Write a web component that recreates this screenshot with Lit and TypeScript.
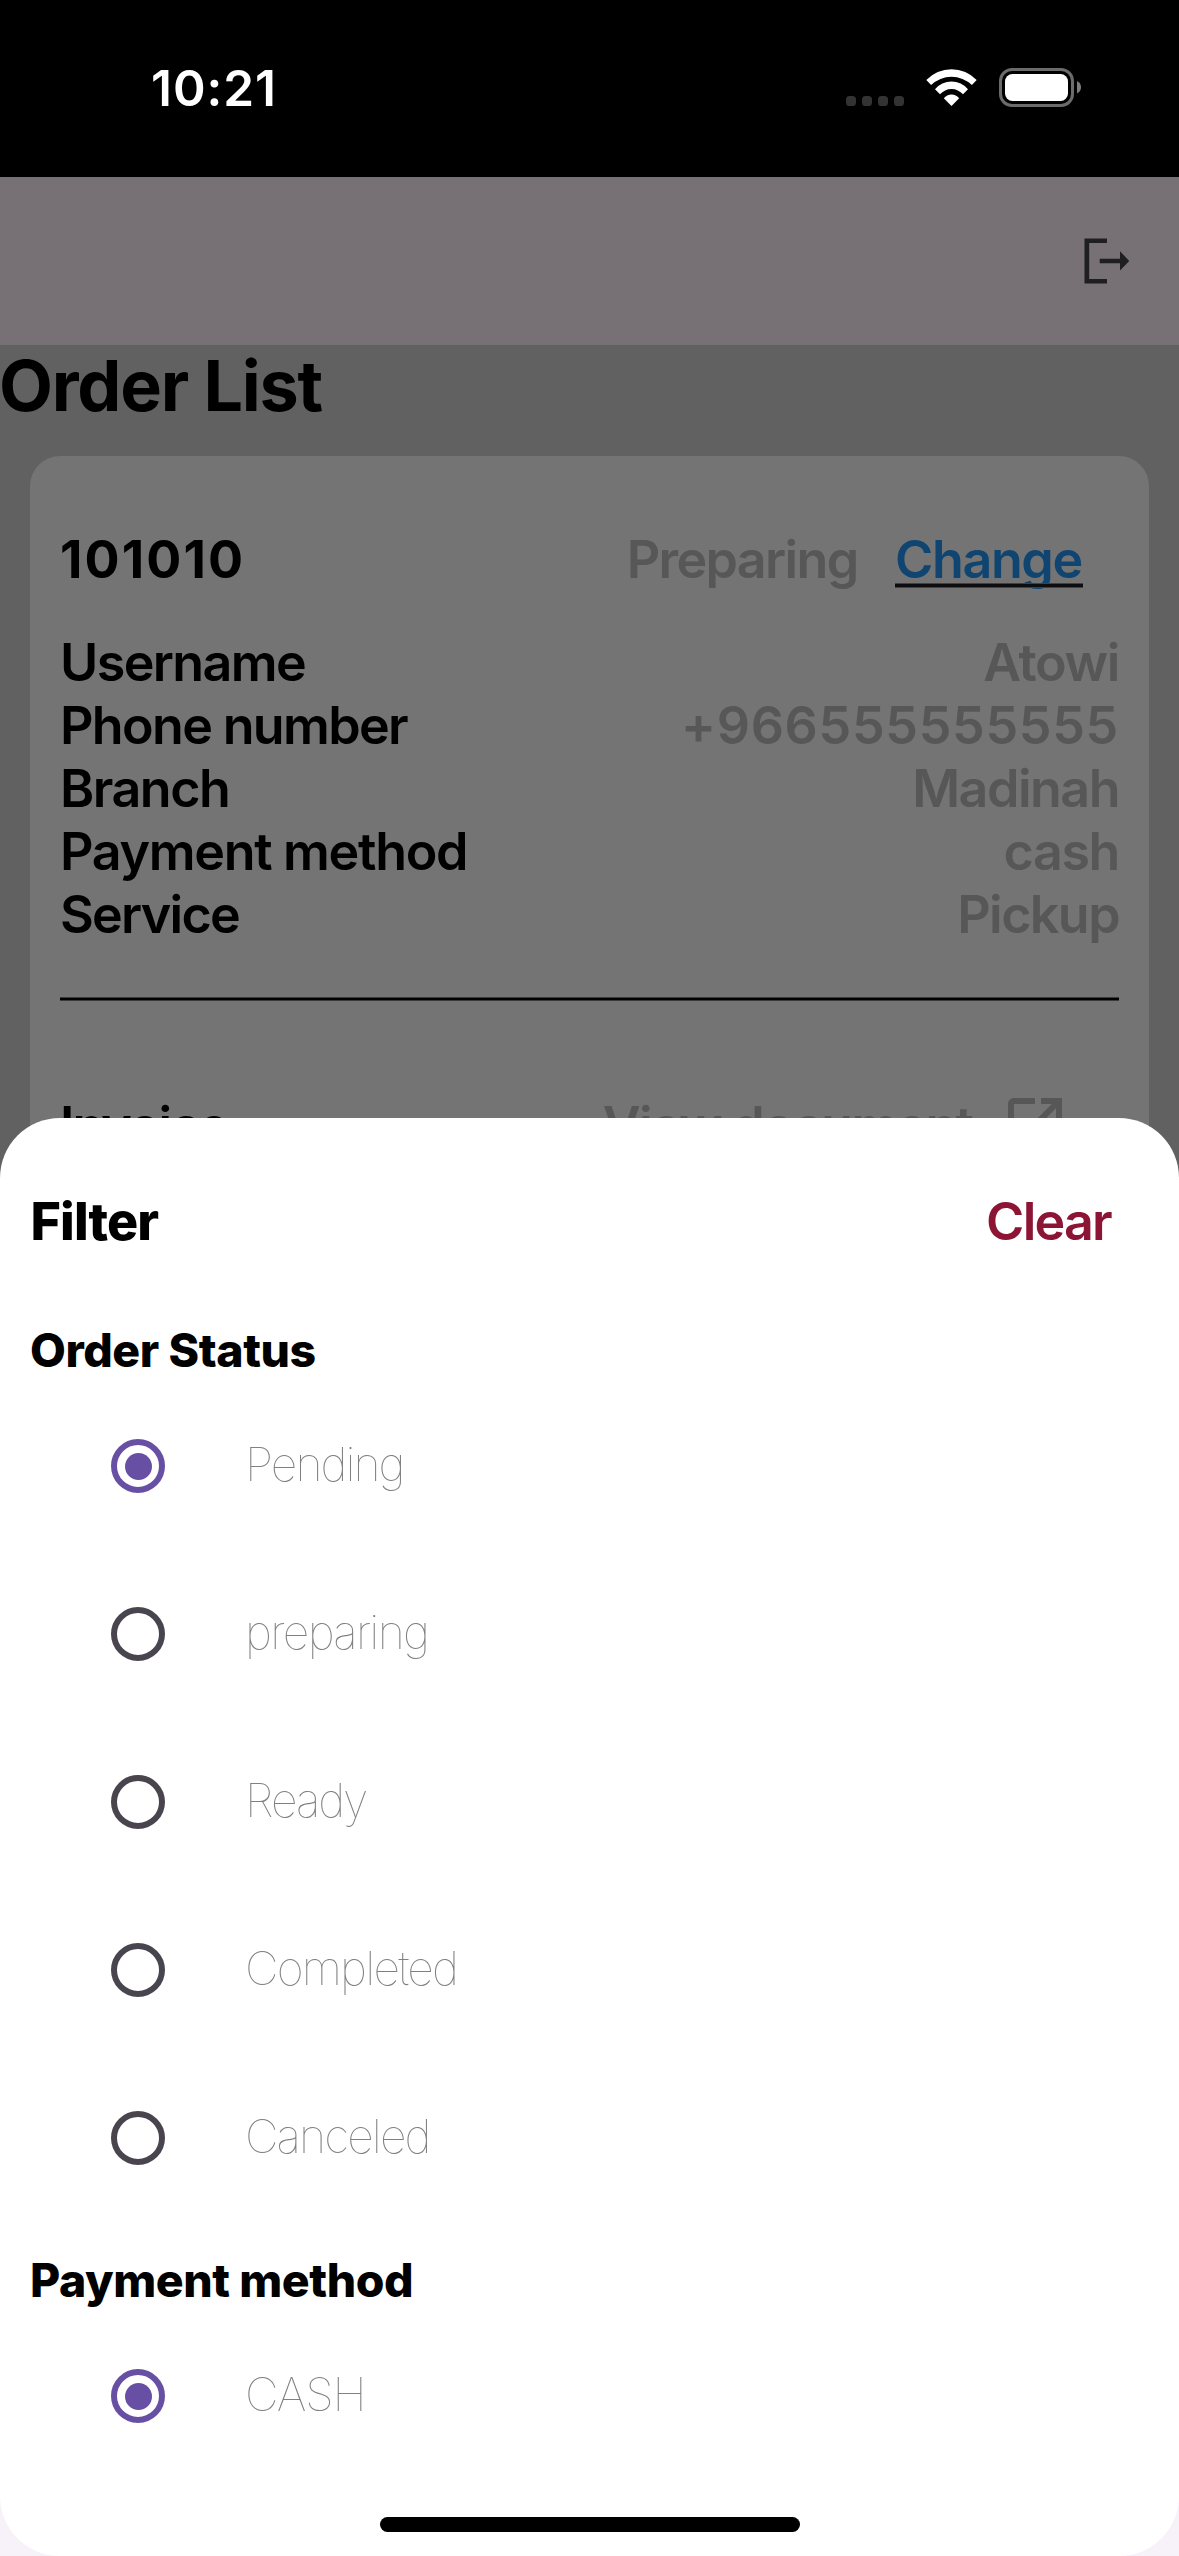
import { LitElement, html, css, svg } from "lit";
import { customElement, property } from "lit/decorators.js";
import { classMap } from "lit/directives/class-map.js";
import { styleMap } from "lit/directives/style-map.js";

/** A piece of text with its own tracking, in pixels. */
interface Tracked {
  text: string;
  tracking: number;
}

const t = (text: string, tracking: number): Tracked => ({ text, tracking });

const spacing = (item: Tracked) => styleMap({ letterSpacing: `${item.tracking}px` });

const orderFields: { label: Tracked; value: Tracked }[] = [
  { label: t("Username", -1.6), value: t("Atowi", -1.36) },
  { label: t("Phone number", -1.67), value: t("+966555555555", 0.68) },
  { label: t("Branch", -1.48), value: t("Madinah", -1.51) },
  { label: t("Payment method", -1.31), value: t("cash", -1.41) },
  { label: t("Service", -1.75), value: t("Pickup", -1.58) },
];

const filterGroups: { title: Tracked; selected: number; options: Tracked[] }[] = [
  {
    title: t("Order Status", -0.42),
    selected: 0,
    options: [
      t("Pending", -2.01),
      t("preparing", -1.72),
      t("Ready", -2.1),
      t("Completed", -1.82),
      t("Canceled", -1.91),
    ],
  },
  { title: t("Payment method", -0.44), selected: 0, options: [t("CASH", -1.22)] },
];

@customElement("status-bar")
class StatusBar extends LitElement {
  static styles = css`
    :host {
      display: flex;
      justify-content: space-between;
      align-items: flex-start;
      box-sizing: border-box;
      height: 177px;
      padding: 58px 98px 0 151px;
      background: #000;
      color: #fff;
    }
    .time {
      font-size: 49.5px;
      font-weight: 600;
      line-height: 60px;
      letter-spacing: 0.95px;
    }
    .icons {
      display: flex;
      gap: 22px;
      padding-top: 10px;
    }
    svg {
      display: block;
    }
  `;

  render() {
    return html`
      <span class="time">10:21</span>
      <div class="icons">
        <svg width="58" height="39" viewBox="0 0 58 39" fill="#333">
          ${[0, 16, 32, 48].map((x) => svg`<rect x=${x} y="28" width="10" height="10" rx="3.6" />`)}
        </svg>
        <svg width="51" height="39" viewBox="0 0 51 39" fill="#fff">
          <path d="M.3 12A34.7 34.7 0 0 1 50.7 12L45.9 17A29.5 29.5 0 0 0 5.1 17Z" />
          <path d="M9 21.2A21.5 21.5 0 0 1 42 21.2L37 26.3A15.1 15.1 0 0 0 14 26.3Z" />
          <path d="M17.8 30.3A9.9 9.9 0 0 1 33.2 30.3L25.5 38Z" />
        </svg>
        <svg width="82" height="39" viewBox="0 0 82 39">
          <rect x="1.5" y="1.5" width="72" height="36" rx="11.5" fill="none" stroke="#6b6b6b" stroke-width="3" />
          <rect x="6" y="6" width="63" height="27" rx="7.5" fill="#fff" />
          <path d="M78 13Q82 15 82 19.2T78 25.4Z" fill="#7c7c7c" />
        </svg>
      </div>
    `;
  }
}

@customElement("order-card")
class OrderCard extends LitElement {
  static styles = css`
    :host {
      display: block;
      height: 2000px;
      box-sizing: border-box;
      margin: 0 30px;
      padding: 72px 30px 0;
      border-radius: 30px;
      background: #747474;
      font-size: 52px;
      font-weight: 600;
      line-height: 63px;
      color: #000;
      white-space: nowrap;
    }
    .row {
      display: flex;
      justify-content: space-between;
      align-items: center;
    }
    .head {
      height: 63px;
      margin-bottom: 40px;
    }
    .number {
      font-weight: 700;
      letter-spacing: 2.12px;
    }
    .muted {
      color: #575757;
    }
    .status {
      display: flex;
      gap: 37.5px;
      padding-right: 36px;
    }
    .state {
      letter-spacing: -1.66px;
    }
    .change {
      position: relative;
      width: 188px;
      letter-spacing: -1.37px;
      color: #0f4570;
    }
    .change::after {
      content: "";
      position: absolute;
      left: 0;
      right: 0;
      top: 54.5px;
      height: 5px;
      background: linear-gradient(#414142 1px, #0e0e10 1px 4.5px, #414142 4.5px);
    }
    .divider {
      height: 4px;
      margin: 51px 0 88px;
      background: linear-gradient(#3a3a3a 1px, #000 1px 3px, #3a3a3a 3px);
    }
    .document {
      display: flex;
      align-items: center;
      gap: 26.8px;
      padding-right: 48px;
    }
    svg {
      display: block;
    }
  `;

  render() {
    return html`
      <div class="row head">
        <span class="number">101010</span>
        <div class="status">
          <span class="state muted">Preparing</span>
          <span class="change">Change</span>
        </div>
      </div>
      ${orderFields.map(
        ({ label, value }) => html`
          <div class="row">
            <span style=${spacing(label)}>${label.text}</span>
            <span class="muted" style=${spacing(value)}>${value.text}</span>
          </div>
        `,
      )}
      <div class="divider"></div>
      <div class="row">
        <span style=${spacing(t("Invoice", -2))}>Invoice</span>
        <div class="document muted">
          <span style=${spacing(t("View document", -1.75))}>View document</span>
          <svg width="72" height="72" viewBox="0 0 24 24" fill="currentColor">
            <path
              d="M14 3v2h3.59l-9.83 9.83 1.41 1.41L19 6.41V10h2V3m-2 16H5V5h7V3H5c-1.11 0-2 .89-2 2v14a2 2 0 0 0 2 2h14a2 2 0 0 0 2-2v-7h-2v7z"
            />
          </svg>
        </div>
      </div>
    `;
  }
}

@customElement("radio-option")
class RadioOption extends LitElement {
  @property({ type: Boolean }) checked = false;
  @property({ attribute: false }) label: Tracked = t("", 0);

  static styles = css`
    :host {
      display: flex;
      align-items: center;
      gap: 79.5px;
      height: 168px;
      padding-left: 111px;
    }
    .ring {
      display: flex;
      align-items: center;
      justify-content: center;
      box-sizing: border-box;
      width: 54px;
      height: 54px;
      border: 6px solid #49454f;
      border-radius: 50%;
    }
    .ring.on {
      border-color: #6750a4;
    }
    .dot {
      width: 27px;
      height: 27px;
      border-radius: 50%;
      background: #6750a4;
    }
    .text {
      padding-bottom: 4px;
      font-size: 46.4px;
      font-weight: 100;
      line-height: 56px;
      color: #808080;
      will-change: transform;
    }
  `;

  render() {
    return html`
      <span class=${classMap({ ring: true, on: this.checked })}>
        ${this.checked ? html`<span class="dot"></span>` : null}
      </span>
      <span class="text" style=${spacing(this.label)}>${this.label.text}</span>
    `;
  }
}

@customElement("filter-sheet")
class FilterSheet extends LitElement {
  static styles = css`
    :host {
      display: block;
      box-sizing: border-box;
      padding-top: 71px;
      border-radius: 60px;
      background: #fff;
      color: #000;
    }
    .header {
      display: flex;
      justify-content: space-between;
      padding: 0 68px 0 30.5px;
      font-size: 52px;
      line-height: 65px;
    }
    .heading {
      font-weight: 800;
      letter-spacing: -0.89px;
    }
    .clear {
      font-weight: 600;
      letter-spacing: -1.76px;
      color: #8c1535;
    }
    .groups {
      display: flex;
      flex-direction: column;
      gap: 30px;
      padding-top: 68px;
    }
    .title {
      padding: 0 0 4px 30px;
      font-size: 46.4px;
      font-weight: 800;
      line-height: 56px;
    }
  `;

  render() {
    return html`
      <div class="header">
        <span class="heading">Filter</span>
        <span class="clear">Clear</span>
      </div>
      <div class="groups">
        ${filterGroups.map(
          (group) => html`
            <section>
              <div class="title" style=${spacing(group.title)}>${group.title.text}</div>
              ${group.options.map(
                (option, i) => html`
                  <radio-option .label=${option} ?checked=${i === group.selected}></radio-option>
                `,
              )}
            </section>
          `,
        )}
      </div>
    `;
  }
}

@customElement("app-root")
class AppRoot extends LitElement {
  static styles = css`
    :host {
      display: block;
      position: relative;
      width: 1179px;
      height: 2556px;
      overflow: hidden;
      background: #f7f1f9;
      font-family: Inter, "Liberation Sans", sans-serif;
    }
    .page {
      height: 2400px;
      overflow: hidden;
      background: #616161;
    }
    .appbar {
      display: flex;
      justify-content: flex-end;
      box-sizing: border-box;
      height: 168px;
      padding: 61px 50px 0 0;
      background: #777175;
    }
    .title {
      height: 111px;
      margin-left: -1px;
      font-size: 70px;
      font-weight: 700;
      line-height: 81px;
      letter-spacing: -1.2px;
      color: #000;
    }
    .sheet {
      position: absolute;
      inset: 1118px 0 0;
    }
    .home {
      position: absolute;
      left: 380px;
      bottom: 24px;
      width: 420px;
      height: 15px;
      border-radius: 7.5px;
      background: #000;
    }
  `;

  render() {
    return html`
      <div class="page">
        <status-bar></status-bar>
        <div class="appbar">
          <svg width="45" height="46" viewBox="0 0 45 46" fill="#1f1e22">
            <path d="M.5.5H23V5H5.2V41H23V45.5H.5Z" />
            <path d="M15.7 20.7H36V13.2L45.3 23 36 32.5V25.2H15.7Z" />
          </svg>
        </div>
        <div class="title">Order List</div>
        <order-card></order-card>
      </div>
      <filter-sheet class="sheet"></filter-sheet>
      <div class="home"></div>
    `;
  }
}
